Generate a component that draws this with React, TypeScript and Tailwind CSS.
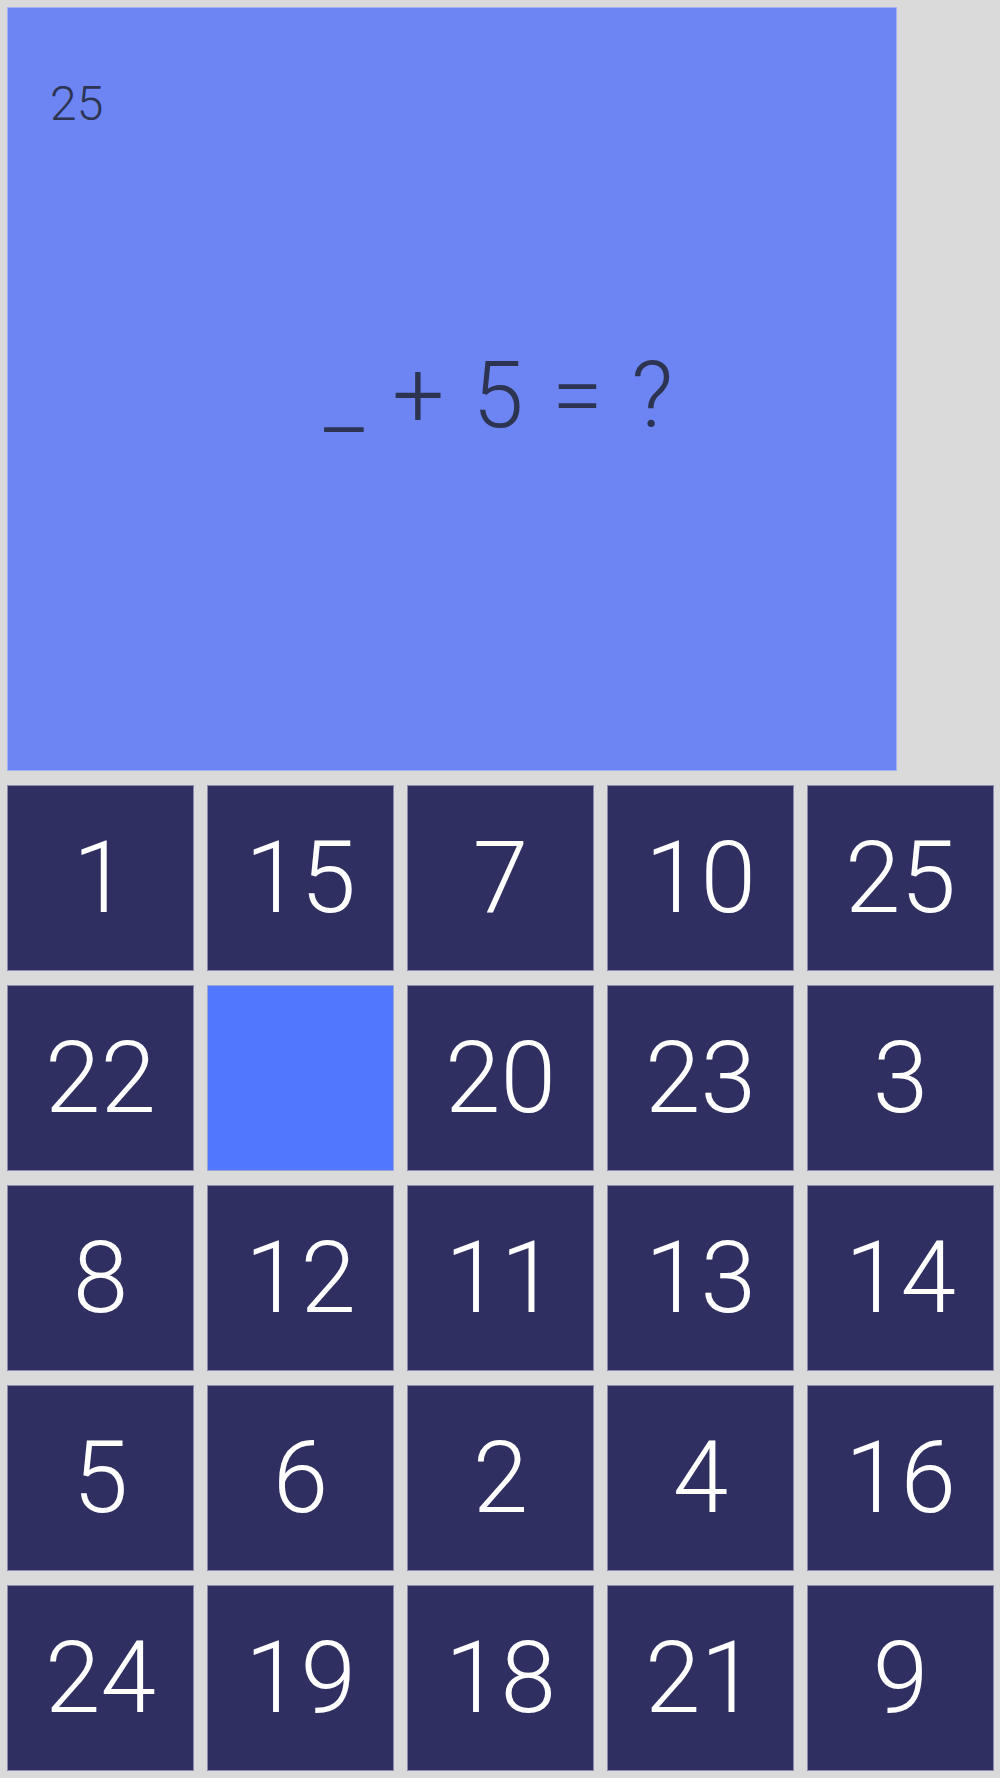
import React from 'react';

const tiles: (number | null)[] = [
  1, 15, 7, 10, 25,
  22, null, 20, 23, 3,
  8, 12, 11, 13, 14,
  5, 6, 2, 4, 16,
  24, 19, 18, 21, 9,
];

const Tile: React.FC<{ value: number | null }> = ({ value }) => {
  if (value === null) {
    return <div className="h-[186px] w-[187px] border border-[#9aa6d8] bg-[#5277ff]" />;
  }
  return (
    <div className="flex h-[186px] w-[187px] items-center justify-center border border-[#8a8aae] bg-[#2f2f61] text-[100px] font-light leading-none text-white">
      {value}
    </div>
  );
};

export default function App() {
  return (
    <div
      className="min-h-[1778px] w-[1000px] bg-[#dadada] pl-[7px] pt-[7px]"
      style={{ fontFamily: 'Roboto, "Liberation Sans", Arial, sans-serif' }}
    >
      {/* Question panel */}
      <div className="flex h-[764px] w-[890px] flex-col border border-[#a4b2f4] bg-[#6d85f2] font-light text-[#2c3452]">
        <div className="pl-[42px] pt-[72px] text-[48px] leading-none">25</div>
        <div className="flex flex-1 items-center pb-[106px] pl-[316px] text-[92px] leading-none">
          <span className="whitespace-pre [word-spacing:6px]">_ + 5 = ?</span>
        </div>
      </div>

      {/* Answer grid */}
      <div className="mt-[14px] grid w-[987px] grid-cols-5 gap-x-[13px] gap-y-[14px]">
        {tiles.map((v, i) => (
          <Tile key={i} value={v} />
        ))}
      </div>
    </div>
  );
}
